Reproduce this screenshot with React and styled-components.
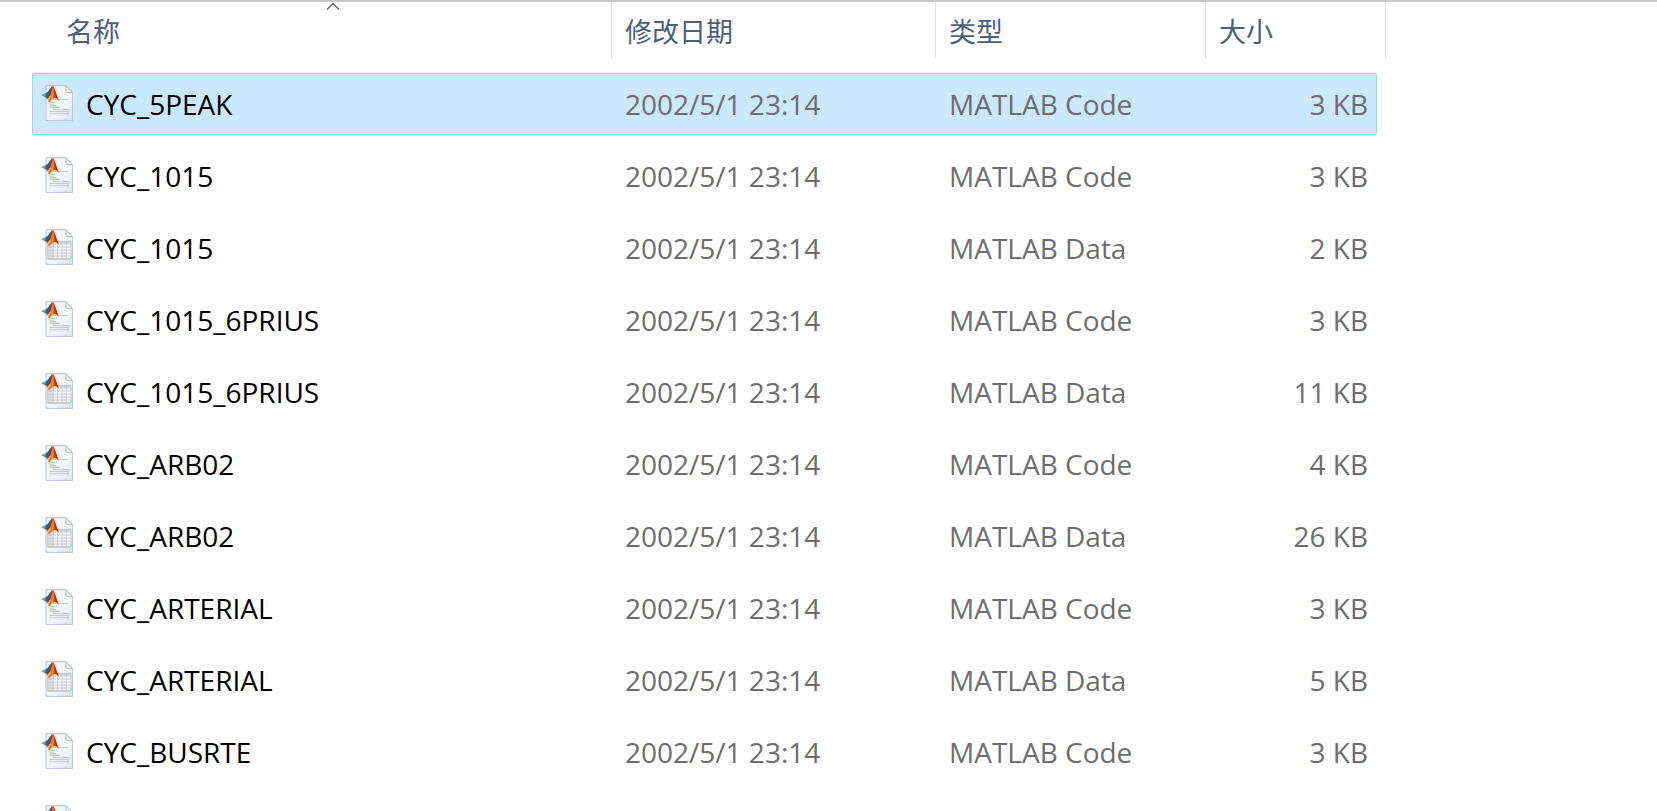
import React from "react";
import styled, { createGlobalStyle } from "styled-components";

const GlobalStyle = createGlobalStyle`
  body {
    margin: 0;
    background: #ffffff;
    font-family: "Open Sans", "Noto Sans CJK SC", sans-serif;
  }
`;

const Window = styled.main`
  box-sizing: border-box;
  height: 100vh;
  overflow: hidden;
  padding: 0 271px 0 32px;
  border-top: 2px solid #c8c8c8;
`;

const FileTable = styled.table`
  width: 100%;
  table-layout: fixed;
  border-collapse: separate;
  border-spacing: 0;
`;

const Column = styled.col`
  width: ${(props) => props.$width};
`;

const HeaderCell = styled.th`
  padding: 0 0 14px;
  font-weight: 400;
`;

const HeaderButton = styled.button`
  position: relative;
  display: block;
  width: 100%;
  height: 57px;
  padding: 0 0 0 ${(props) => (props.$first ? "34px" : "13px")};
  border: none;
  border-right: 1px solid #e2e2e2;
  background: none;
  color: #4c607a;
  font-family: "Noto Sans CJK SC", sans-serif;
  font-size: 27px;
  font-weight: 400;
  line-height: 40px;
  text-align: left;
`;

const SortMark = styled.span`
  position: absolute;
  top: 0;
  left: 22px;
  right: 0;
  display: flex;
  justify-content: center;
`;

const Row = styled.tr`
  --fill: ${(props) => (props.$selected ? "#cce8ff" : "transparent")};
  --edge: ${(props) => (props.$selected ? "#99d1ff" : "transparent")};
`;

const BodyCell = styled.td`
  padding: 0 0 10px;
`;

const CellBox = styled.div`
  box-sizing: border-box;
  display: flex;
  align-items: center;
  height: 62px;
  padding: 0 0 0 13px;
  border: solid var(--edge);
  border-width: 1px 0;
  background: var(--fill);
  color: #6d6d6d;
  font-size: 28px;
  line-height: 40px;
  white-space: nowrap;
`;

const NameBox = styled(CellBox)`
  gap: 13px;
  padding-left: 8px;
  border-left-width: 1px;
  border-radius: 2px 0 0 2px;
  color: #000000;
`;

const SizeBox = styled(CellBox)`
  justify-content: flex-end;
  padding-right: 8px;
  border-right-width: 1px;
  border-radius: 0 2px 2px 0;
`;

const Icon = styled.svg`
  flex: none;
  width: 32px;
  height: 38px;
`;

const date = "2002/5/1 23:14";

const files = [
  { name: "CYC_5PEAK", date, kind: "Code", size: "3 KB", selected: true },
  { name: "CYC_1015", date, kind: "Code", size: "3 KB" },
  { name: "CYC_1015", date, kind: "Data", size: "2 KB" },
  { name: "CYC_1015_6PRIUS", date, kind: "Code", size: "3 KB" },
  { name: "CYC_1015_6PRIUS", date, kind: "Data", size: "11 KB" },
  { name: "CYC_ARB02", date, kind: "Code", size: "4 KB" },
  { name: "CYC_ARB02", date, kind: "Data", size: "26 KB" },
  { name: "CYC_ARTERIAL", date, kind: "Code", size: "3 KB" },
  { name: "CYC_ARTERIAL", date, kind: "Data", size: "5 KB" },
  { name: "CYC_BUSRTE", date, kind: "Code", size: "3 KB" },
];

const CodeLines = () => (
  <g fill="none" strokeWidth="2">
    <path d="M34 44H80" stroke="#8fcb95" />
    <path d="M26 52H44M26 57H40M26 62H46M26 67H58" stroke="#9ad6a1" strokeWidth="3" />
    <path d="M34 74H86M26 80H86M26 86H84" stroke="#a3a8ae" strokeDasharray="7 1" />
    <path d="M26 94H30" stroke="#c3c7cc" />
  </g>
);

const DataGrid = () => (
  <g>
    <path d="M20 37H90V90H20Z" fill="#fbfbfb" />
    <path d="M20 37H90V44H20ZM20 44H36V90H20Z" fill="#e4e4e4" />
    <path
      d="M20 37H90V90H20ZM20 45H90M20 54H90M20 63H90M20 72H90M20 81H90M37 37V90M50 37V90M63 37V90M76 37V90"
      fill="none"
      stroke="#b3b6bb"
      strokeWidth="2"
    />
    <path d="M20 38H90M20 90H90" stroke="#a3acba" strokeWidth="2" />
  </g>
);

const FileIcon = ({ kind }) => (
  <Icon viewBox="0 0 96 114" aria-hidden="true">
    <defs>
      <linearGradient id="paper" x1="0" y1="0" x2="1" y2="1">
        <stop offset="0" stopColor="#e9edf1" />
        <stop offset="0.5" stopColor="#f8fafb" />
        <stop offset="1" stopColor="#d8e1ec" />
      </linearGradient>
      <linearGradient id="flame" x1="0" y1="0" x2="1" y2="0">
        <stop offset="0" stopColor="#8a2d1c" />
        <stop offset="0.3" stopColor="#e0611f" />
        <stop offset="0.5" stopColor="#f08a2c" />
        <stop offset="0.7" stopColor="#cf401b" />
        <stop offset="1" stopColor="#b02a18" />
      </linearGradient>
    </defs>
    <path
      d="M15 2H75L95 23V106H15Z"
      fill="url(#paper)"
      stroke="#b4c2d5"
      strokeWidth="3"
    />
    <path d="M75 2V23H95Z" fill="#eef2f7" stroke="#adbbcf" strokeWidth="3" />
    {kind === "Code" ? <CodeLines /> : <DataGrid />}
    <path d="M0 30L16 23L26 30L15 39Z" fill="#4da2d6" />
    <path d="M16 23C23 21 26 10 34 3L31 24L22 37L13 37Z" fill="#2a6496" />
    <path
      d="M15 39C22 36 27 14 36 2C41 7 47 34 54 46C45 38 40 38 35 42C31 46 28 51 23 51C21 43 19 40 15 39Z"
      fill="url(#flame)"
    />
    <path d="M36 2C33 15 30 27 22 36L18 38C25 30 28 13 36 2Z" fill="#6a2a2c" />
    <path d="M30 30C30 38 26 44 22 50L19 41Z" fill="#f9b23f" />
    <path d="M36 2C41 7 47 34 54 46L43 37C41 26 40 14 36 2Z" fill="#b52f18" />
  </Icon>
);

const SortArrow = () => (
  <SortMark>
    <svg width="14" height="9" viewBox="0 0 14 9" aria-hidden="true">
      <path d="M1 7.5L7 1.5L13 7.5" fill="none" stroke="#555555" strokeWidth="1.2" />
    </svg>
  </SortMark>
);

const FileRow = ({ file }) => (
  <Row $selected={file.selected}>
    <BodyCell>
      <NameBox>
        <FileIcon kind={file.kind} />
        {file.name}
      </NameBox>
    </BodyCell>
    <BodyCell>
      <CellBox>{file.date}</CellBox>
    </BodyCell>
    <BodyCell>
      <CellBox>MATLAB {file.kind}</CellBox>
    </BodyCell>
    <BodyCell>
      <SizeBox>{file.size}</SizeBox>
    </BodyCell>
  </Row>
);

const PendingRow = () => (
  <Row>
    <BodyCell colSpan={4}>
      <NameBox>
        <FileIcon kind="Code" />
      </NameBox>
    </BodyCell>
  </Row>
);

const App = () => {
  return (
    <React.Fragment>
      <GlobalStyle />
      <Window>
        <FileTable>
          <colgroup>
            <Column $width="auto" />
            <Column $width="324px" />
            <Column $width="270px" />
            <Column $width="171px" />
            <Column $width="9px" />
          </colgroup>
          <thead>
            <tr>
              <HeaderCell aria-sort="ascending">
                <HeaderButton $first>
                  名称
                  <SortArrow />
                </HeaderButton>
              </HeaderCell>
              <HeaderCell>
                <HeaderButton>修改日期</HeaderButton>
              </HeaderCell>
              <HeaderCell>
                <HeaderButton>类型</HeaderButton>
              </HeaderCell>
              <HeaderCell colSpan={2}>
                <HeaderButton>大小</HeaderButton>
              </HeaderCell>
            </tr>
          </thead>
          <tbody>
            {files.map((file, index) => (
              <FileRow key={index} file={file} />
            ))}
            <PendingRow />
          </tbody>
        </FileTable>
      </Window>
    </React.Fragment>
  );
};

export default App;
